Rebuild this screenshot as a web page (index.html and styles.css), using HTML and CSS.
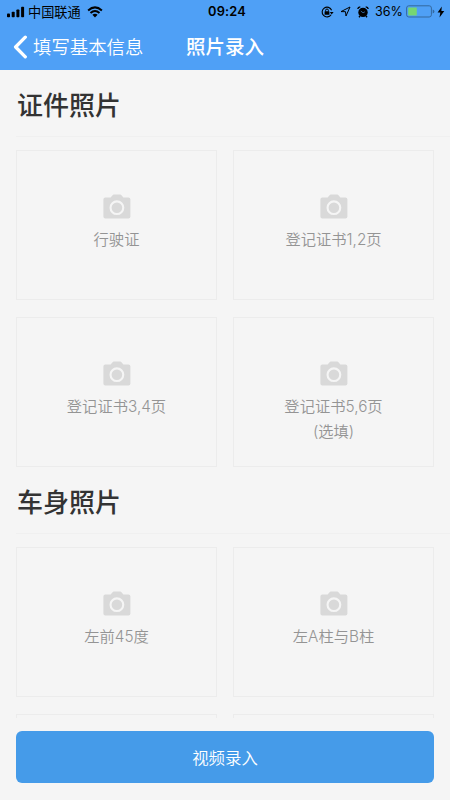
FILE: index.html
```html
<!DOCTYPE html>
<html lang="zh-CN">
<head>
<meta charset="utf-8">
<title>照片录入</title>
<link rel="stylesheet" href="styles.css">
</head>
<body>
<svg class="defs" width="0" height="0">
  <symbol id="camera" viewBox="0 0 28 25">
    <path fill-rule="evenodd" d="M2.3 3.6H7.6L9.6 1.2Q10.1.6 10.9.6H17.2Q18 .6 18.5 1.2L20.4 3.6H25.4Q27.4 3.6 27.4 5.6V22.4Q27.4 24.4 25.4 24.4H2.3Q.4 24.4.4 22.4V5.6Q.4 3.6 2.3 3.6ZM13.9 6.3A7.4 7.4 0 1 0 13.9 21.1A7.4 7.4 0 1 0 13.9 6.3ZM13.9 8.4A5.3 5.3 0 1 1 13.9 19A5.3 5.3 0 1 1 13.9 8.4Z"/>
  </symbol>
</svg>
<header class="header">
  <div class="status">
    <div class="status-left">
      <svg width="18" height="12" viewBox="0 0 18 12"><rect x="0" y="7.5" width="3" height="3.7" rx=".8"/><rect x="4.7" y="5.7" width="3" height="5.5" rx=".8"/><rect x="9.4" y="3.5" width="3" height="7.7" rx=".8"/><rect x="14.1" y=".8" width="3" height="10.4" rx=".8"/></svg>
      <span class="carrier">中国联通</span>
      <svg class="wifi" width="16" height="12" viewBox="0 0 16 12"><path d="M1.1 4.4Q8-1.6 14.9 4.4M3.5 7Q8 3.1 12.5 7" fill="none" stroke="#000" stroke-width="2"/><path d="M5.4 8.7Q8 6.7 10.6 8.7L8 11.4Z"/></svg>
    </div>
    <div class="time">09:24</div>
    <div class="status-right">
      <svg width="13" height="12" viewBox="0 0 13 12"><path d="M10.1 8.8A4.9 4.9 0 1 1 10.6 4.2" fill="none" stroke="#000" stroke-width="1.1"/><path d="M8.8 6H12.6L10.7 8.4Z"/><rect x="3.6" y="5.3" width="4.8" height="3.5" rx=".4"/><path d="M4.6 5.5V4.4Q4.6 3 6 3T7.4 4.4V5.5" fill="none" stroke="#000"/></svg>
      <svg class="arrow" width="11" height="11" viewBox="0 0 11 11"><path d="M1 5.6L10 1 6 10 5.5 5.7Z" fill="none" stroke="#000" stroke-linejoin="round"/></svg>
      <svg class="alarm" width="12" height="12" viewBox="0 0 12 12"><circle cx="6" cy="6.4" r="4.7"/><path d="M.8 3Q1 1.1 3.3.9M11.2 3Q11 1.1 8.7.9M3 10L2 11.3M9 10L10 11.3" fill="none" stroke="#000" stroke-width="1.4"/><path d="M3.8 5L6 6.8L7.9 5.8" fill="none" stroke="#4f9ff6" stroke-width=".6"/></svg>
      <span class="percent">36%</span>
      <svg class="battery" width="29" height="13" viewBox="0 0 29 13"><rect x=".6" y=".8" width="24.8" height="11.2" rx="2.2" fill="none" stroke="#34699f" stroke-width="1"/><rect x="2.2" y="2.4" width="8.6" height="8" rx=".6" fill="#76d672"/><path d="M26.7 4.4Q28.4 4.7 28.4 6.4T26.7 8.4Z" fill="#34699f"/></svg>
      <svg class="bolt" width="8" height="12" viewBox="0 0 8 12"><path d="M4.8.4L.6 6.5H3.3L2.5 11.6L7.3 5H4.4Z"/></svg>
    </div>
  </div>
  <nav class="nav">
    <a class="back"><svg width="15" height="24" viewBox="0 0 15 24"><path d="M12.3 2.2L2.6 12L12.3 21.8" fill="none" stroke="#fff" stroke-width="3.3" stroke-linecap="round" stroke-linejoin="round"/></svg><span>填写基本信息</span></a>
    <h1 class="title">照片录入</h1>
    <span></span>
  </nav>
</header>
<main class="content">
  <section>
    <h2 class="heading">证件照片</h2>
    <div class="grid">
      <div class="card"><svg class="camera"><use href="#camera"/></svg><span>行驶证</span></div>
      <div class="card"><svg class="camera"><use href="#camera"/></svg><span>登记证书1,2页</span></div>
      <div class="card"><svg class="camera"><use href="#camera"/></svg><span>登记证书3,4页</span></div>
      <div class="card"><svg class="camera"><use href="#camera"/></svg><span>登记证书5,6页<br>(选填)</span></div>
    </div>
  </section>
  <section>
    <h2 class="heading">车身照片</h2>
    <div class="grid">
      <div class="card"><svg class="camera"><use href="#camera"/></svg><span>左前45度</span></div>
      <div class="card"><svg class="camera"><use href="#camera"/></svg><span>左A柱与B柱</span></div>
      <div class="card"></div>
      <div class="card"></div>
    </div>
  </section>
</main>
<footer class="footer"><button class="submit">视频录入</button></footer>
</body>
</html>
```
FILE: styles.css
```css
* { box-sizing: border-box; }
body {
  margin: 0;
  height: 800px;
  overflow: hidden;
  display: flex;
  flex-direction: column;
  background: #f5f5f5;
  font-family: Inter, "Noto Sans CJK SC", sans-serif;
}
svg { display: block; flex: none; }
.defs { position: absolute; }
.header { height: 70px; flex: none; background: #4fa0f6; }
.status {
  height: 23px;
  padding: 0 5px 0 7px;
  display: grid;
  grid-template-columns: 1fr auto 1fr;
  align-items: center;
  font-size: 13px;
  line-height: 23px;
  color: #000;
}
.status-left, .status-right { display: flex; align-items: center; }
.status-right { justify-content: flex-end; }
.carrier { margin-left: 3px; padding-top: 1px; line-height: 22px; font-size: 13.2px; }
.wifi { margin-left: 6px; }
.time { padding-left: 2px; font-weight: 600; font-size: 12.8px; letter-spacing: .2px; }
.arrow { margin-left: 6px; }
.alarm { margin-left: 6px; }
.percent { margin-left: 6px; font-size: 12.6px; }
.battery { margin-left: 3px; }
.bolt { margin-left: 2px; }
.nav {
  height: 47px;
  padding: 0 13px;
  display: grid;
  grid-template-columns: 1fr auto 1fr;
  align-items: center;
  color: #fff;
}
.back { display: flex; align-items: center; gap: 5px; font-size: 18.4px; line-height: 24px; font-weight: 350; }
.title { margin: 0; font-size: 19.5px; line-height: 24px; font-weight: 500; }
.content { flex: 1; min-height: 0; overflow: hidden; padding-left: 16px; }
.heading {
  margin: 0 0 13px;
  height: 67px;
  padding-left: 1px;
  border-bottom: 1px solid #f0f0f0;
  font-size: 26px;
  line-height: 71px;
  font-weight: 500;
  color: #333;
}
.grid {
  display: grid;
  grid-template-columns: 201px 201px;
  grid-auto-rows: 150px;
  gap: 17px 16px;
}
section:first-child .grid { height: 317px; }
.card {
  border: 1px solid #ececec;
  padding-top: 43px;
  display: flex;
  flex-direction: column;
  align-items: center;
  gap: 8px;
  text-align: center;
  font-size: 15.3px;
  line-height: 25px;
  font-weight: 350;
  color: #949494;
}
.camera { width: 28px; height: 25px; fill: #d9d9d9; }
.footer { height: 82px; flex: none; padding: 13px 16px 0; }
.submit {
  display: block;
  width: 418px;
  height: 52px;
  padding: 0;
  border: 0;
  border-radius: 6px;
  background: #459be9;
  color: #fff;
  font: inherit;
  font-size: 16.4px;
  font-weight: 350;
}
```
